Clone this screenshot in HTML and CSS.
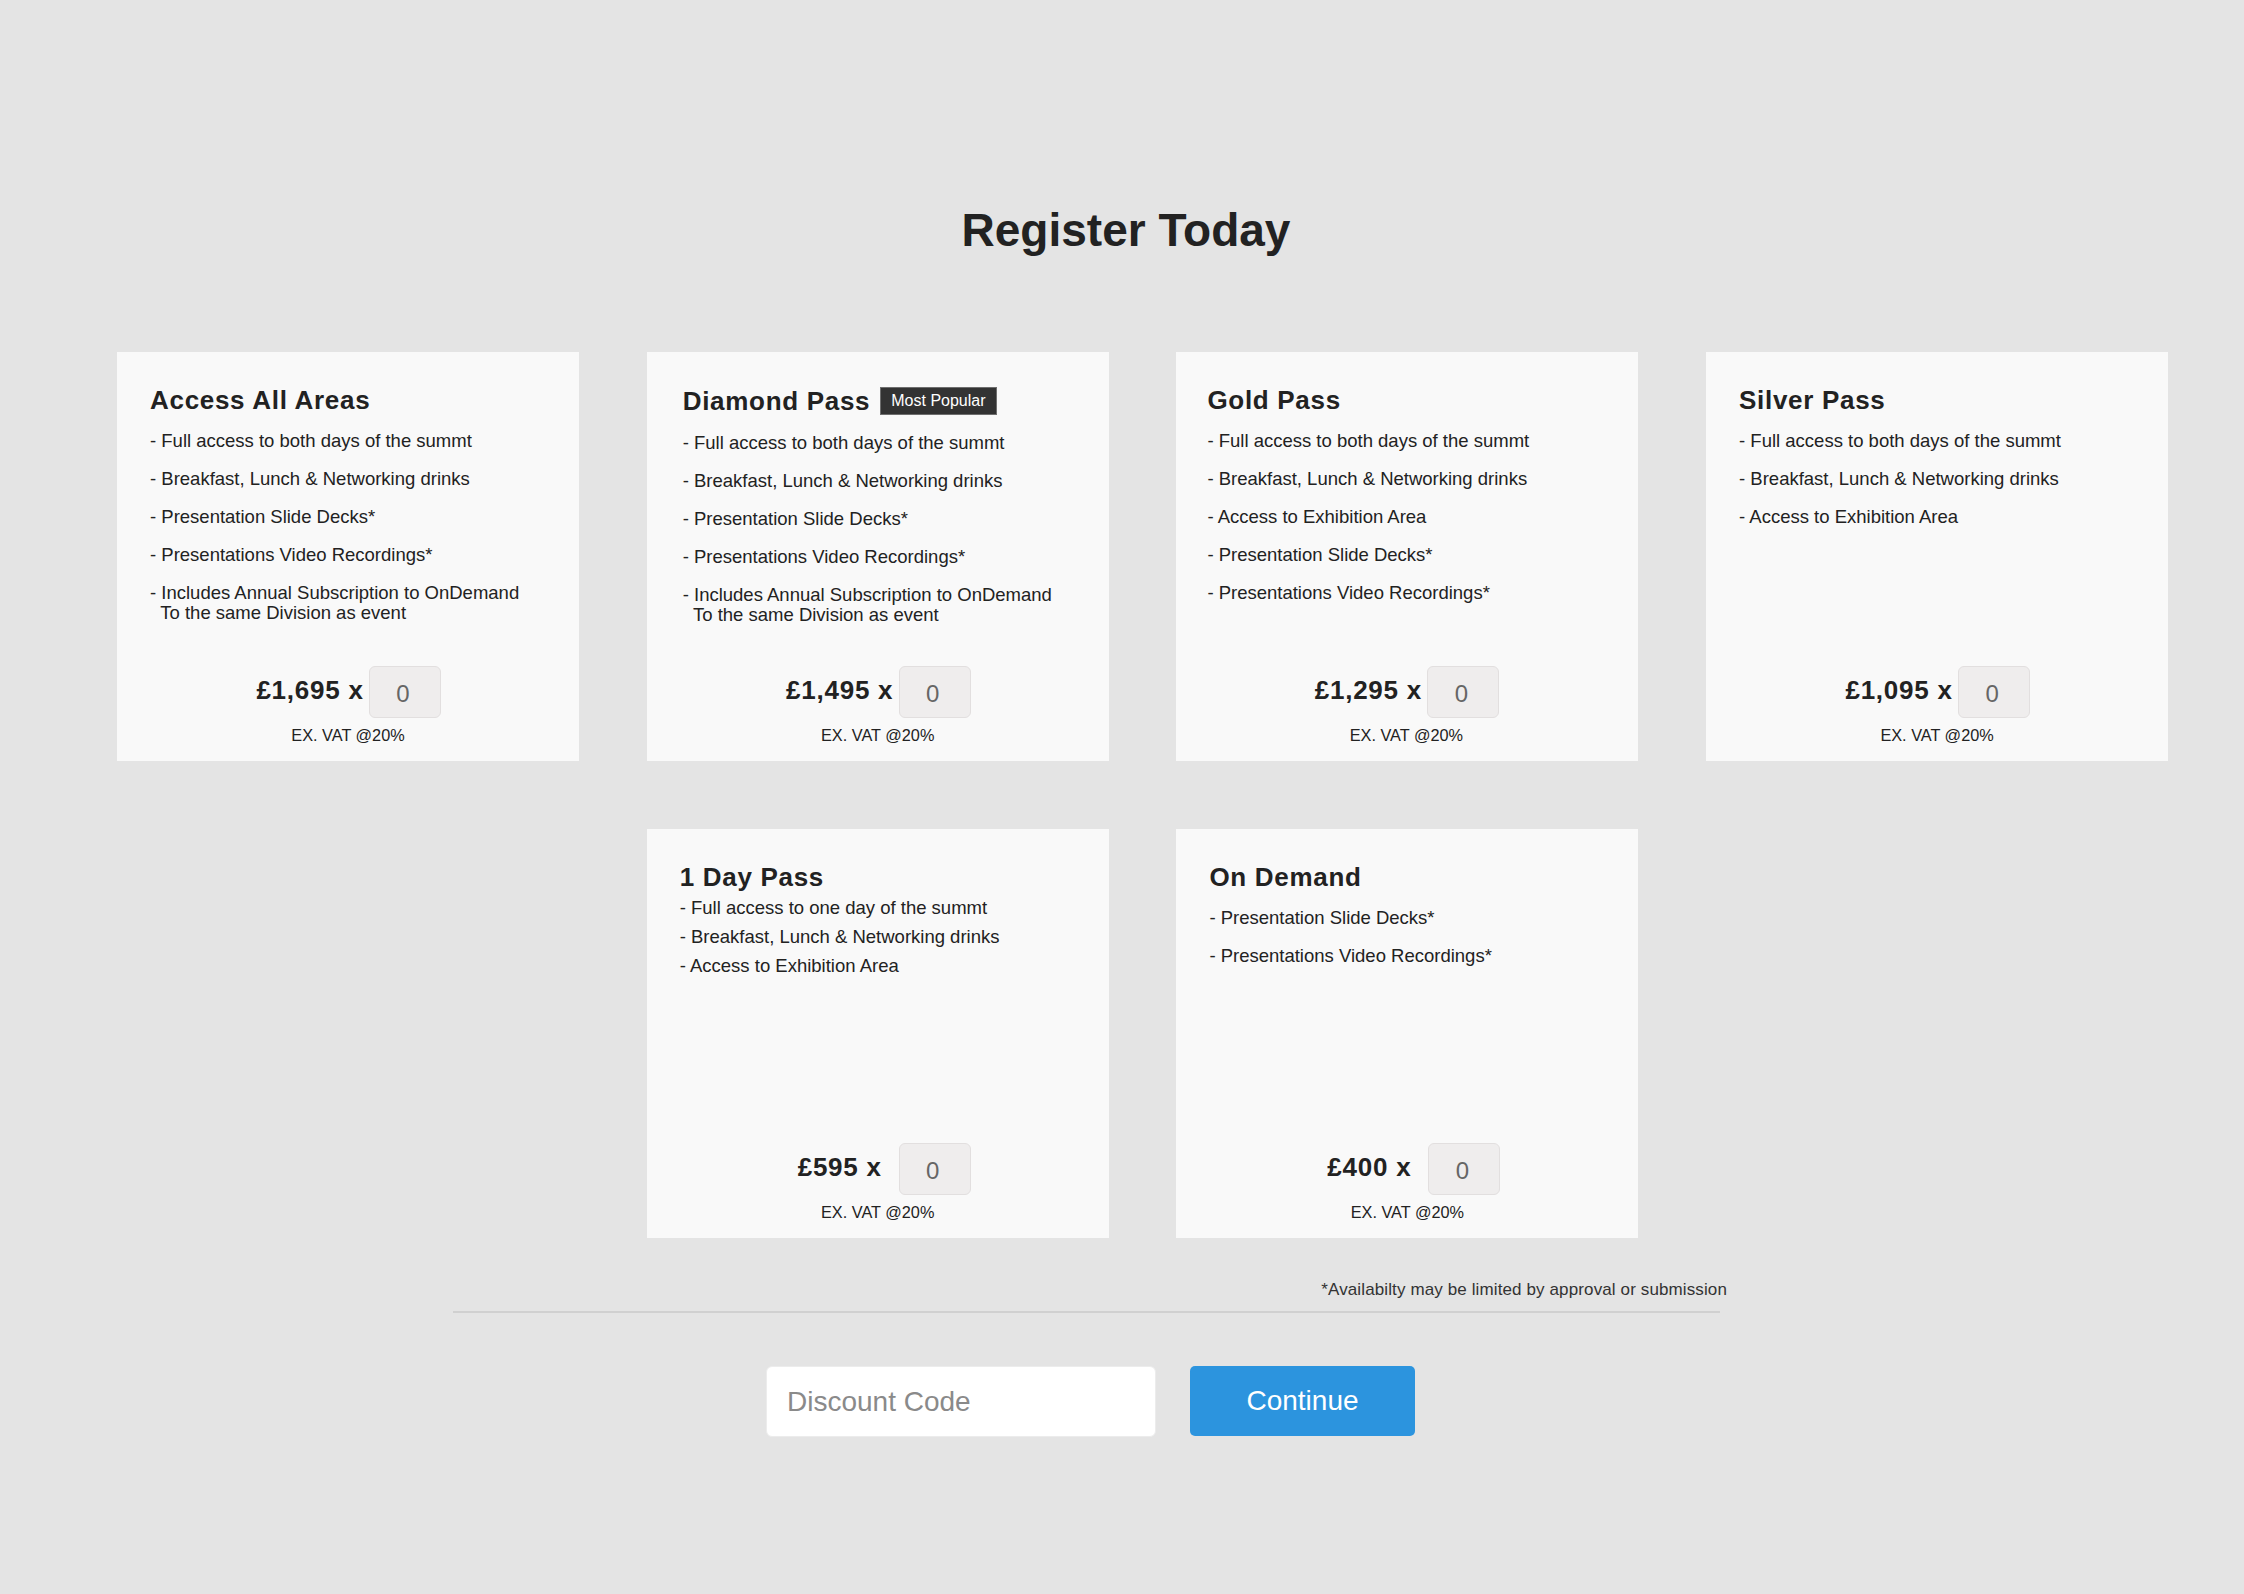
FILE: index.html
```html
<!DOCTYPE html>
<html lang="en">
<head>
<meta charset="utf-8">
<title>Register Today</title>
<link rel="stylesheet" href="styles.css">
</head>
<body>
<main class="page">
  <h1 class="page-title">Register Today</h1>

  <section class="passes">
    <article class="card">
      <div class="card-head"><h2 class="card-title">Access All Areas</h2></div>
      <ul class="features">
        <li>- Full access to both days of the summt</li>
        <li>- Breakfast, Lunch &amp; Networking drinks</li>
        <li>- Presentation Slide Decks*</li>
        <li>- Presentations Video Recordings*</li>
        <li>- Includes Annual Subscription to OnDemand<br>&nbsp;&nbsp;To the same Division as event</li>
      </ul>
      <div class="pricing">
        <div class="price-row">
          <span class="price">£1,695 x</span>
          <input class="qty" type="text" value="0" aria-label="Quantity">
        </div>
        <p class="vat">EX. VAT @20%</p>
      </div>
    </article>

    <article class="card card--wide-pad">
      <div class="card-head card-head--badge">
        <h2 class="card-title">Diamond Pass</h2>
        <span class="badge">Most Popular</span>
      </div>
      <ul class="features">
        <li>- Full access to both days of the summt</li>
        <li>- Breakfast, Lunch &amp; Networking drinks</li>
        <li>- Presentation Slide Decks*</li>
        <li>- Presentations Video Recordings*</li>
        <li>- Includes Annual Subscription to OnDemand<br>&nbsp;&nbsp;To the same Division as event</li>
      </ul>
      <div class="pricing">
        <div class="price-row">
          <span class="price">£1,495 x</span>
          <input class="qty" type="text" value="0" aria-label="Quantity">
        </div>
        <p class="vat">EX. VAT @20%</p>
      </div>
    </article>

    <article class="card card--narrow-pad">
      <div class="card-head"><h2 class="card-title">Gold Pass</h2></div>
      <ul class="features">
        <li>- Full access to both days of the summt</li>
        <li>- Breakfast, Lunch &amp; Networking drinks</li>
        <li>- Access to Exhibition Area</li>
        <li>- Presentation Slide Decks*</li>
        <li>- Presentations Video Recordings*</li>
      </ul>
      <div class="pricing">
        <div class="price-row">
          <span class="price">£1,295 x</span>
          <input class="qty" type="text" value="0" aria-label="Quantity">
        </div>
        <p class="vat">EX. VAT @20%</p>
      </div>
    </article>

    <article class="card">
      <div class="card-head"><h2 class="card-title">Silver Pass</h2></div>
      <ul class="features">
        <li>- Full access to both days of the summt</li>
        <li>- Breakfast, Lunch &amp; Networking drinks</li>
        <li>- Access to Exhibition Area</li>
      </ul>
      <div class="pricing">
        <div class="price-row">
          <span class="price">£1,095 x</span>
          <input class="qty" type="text" value="0" aria-label="Quantity">
        </div>
        <p class="vat">EX. VAT @20%</p>
      </div>
    </article>

    <article class="card card--compact card--second-col">
      <div class="card-head"><h2 class="card-title">1 Day Pass</h2></div>
      <ul class="features">
        <li>- Full access to one day of the summt</li>
        <li>- Breakfast, Lunch &amp; Networking drinks</li>
        <li>- Access to Exhibition Area</li>
      </ul>
      <div class="pricing">
        <div class="price-row">
          <span class="price">£595 x</span>
          <input class="qty" type="text" value="0" aria-label="Quantity">
        </div>
        <p class="vat">EX. VAT @20%</p>
      </div>
    </article>

    <article class="card">
      <div class="card-head"><h2 class="card-title">On Demand</h2></div>
      <ul class="features">
        <li>- Presentation Slide Decks*</li>
        <li>- Presentations Video Recordings*</li>
      </ul>
      <div class="pricing">
        <div class="price-row">
          <span class="price">£400 x</span>
          <input class="qty" type="text" value="0" aria-label="Quantity">
        </div>
        <p class="vat">EX. VAT @20%</p>
      </div>
    </article>
  </section>

  <section class="footer">
    <p class="note">*Availabilty may be limited by approval or submission</p>
    <div class="divider"></div>
  </section>

  <form class="actions">
    <input class="discount" type="text" placeholder="Discount Code" aria-label="Discount Code">
    <button class="continue" type="button">Continue</button>
  </form>
</main>
</body>
</html>
```

FILE: styles.css
```css
* {
  box-sizing: border-box;
}

html,
body {
  margin: 0;
  padding: 0;
}

body {
  background: #e4e4e4;
  color: #222222;
  font-family: "Liberation Sans", Arial, Helvetica, sans-serif;
  min-height: 1594px;
}

.page {
  padding-top: 202px;
  padding-bottom: 60px;
}

.page-title {
  margin: 0;
  padding-left: 8px;
  font-size: 46px;
  line-height: 56px;
  font-weight: 700;
  text-align: center;
  color: #222222;
}

.passes {
  margin-top: 94px;
  padding-left: 117px;
  display: grid;
  grid-template-columns: repeat(4, 462px);
  column-gap: 67.7px;
  row-gap: 68.3px;
}

.card {
  height: 409px;
  background: #f9f9f9;
  padding: 33px 33px 16px 33px;
  display: flex;
  flex-direction: column;
}

.card--wide-pad {
  padding-left: 36px;
  padding-right: 36px;
}

.card--narrow-pad {
  padding-left: 31px;
  padding-right: 33px;
}

.card--second-col {
  grid-column: 2;
}

.card-head {
  display: flex;
  align-items: center;
  min-height: 30px;
}

.card-head--badge {
  min-height: 32px;
}

.card-title {
  margin: 0;
  font-size: 26px;
  line-height: 30px;
  font-weight: 700;
  letter-spacing: 0.7px;
  color: #222222;
}

.badge {
  margin-left: 9.5px;
  height: 28px;
  padding: 0 10.5px;
  border: 1px solid #6e6e6e;
  background: #333333;
  color: #ffffff;
  font-size: 16px;
  line-height: 26px;
  white-space: nowrap;
}

.features {
  list-style: none;
  margin: 15.9px 0 0 0;
  padding: 0;
  display: flex;
  flex-direction: column;
  gap: 17.6px;
}

.features li {
  font-size: 18.5px;
  line-height: 20.4px;
  color: #222222;
  white-space: nowrap;
}

.card--compact .features {
  margin-top: 5.9px;
  gap: 8.6px;
}

.pricing {
  margin-top: auto;
  display: flex;
  flex-direction: column;
  align-items: center;
}

.price-row {
  display: flex;
  align-items: center;
  height: 52px;
}

.price {
  width: 110px;
  margin-right: 4px;
  padding-bottom: 4px;
  text-align: center;
  font-size: 26px;
  line-height: 30px;
  font-weight: 700;
  letter-spacing: 0.75px;
  white-space: nowrap;
  color: #222222;
}

.qty {
  width: 72px;
  height: 52px;
  margin: 0;
  padding: 3px 4px 0 0;
  border: 1px solid #e2dfdf;
  border-radius: 6px;
  background: #efeded;
  color: #666666;
  font-family: "Liberation Sans", Arial, Helvetica, sans-serif;
  font-size: 24px;
  text-align: center;
  outline: none;
}

.vat {
  margin: 7px 0 0 0;
  font-size: 16.3px;
  line-height: 20px;
  color: #222222;
}

.footer {
  margin-top: 42px;
  margin-left: 453px;
}

.note {
  margin: 0;
  width: 1274px;
  text-align: right;
  font-size: 17px;
  line-height: 20px;
  letter-spacing: 0.12px;
  color: #333333;
}

.divider {
  margin-top: 11px;
  width: 1267px;
  height: 2px;
  background: #d0d0d0;
}

.actions {
  margin: 53px 0 0 766px;
  display: flex;
  gap: 34px;
  align-items: flex-start;
}

.discount {
  width: 390px;
  height: 71px;
  margin: 0;
  padding: 0 20px;
  border: 1px solid #ececec;
  border-radius: 6px;
  background: #ffffff;
  color: #333333;
  font-family: "Liberation Sans", Arial, Helvetica, sans-serif;
  font-size: 28px;
  outline: none;
}

.discount::placeholder {
  color: #8a8a8a;
}

.continue {
  width: 225px;
  height: 70px;
  margin: 0;
  padding: 0;
  border: none;
  border-radius: 5px;
  background: #2c94de;
  color: #ffffff;
  font-family: "Liberation Sans", Arial, Helvetica, sans-serif;
  font-size: 28px;
  cursor: pointer;
}
```
